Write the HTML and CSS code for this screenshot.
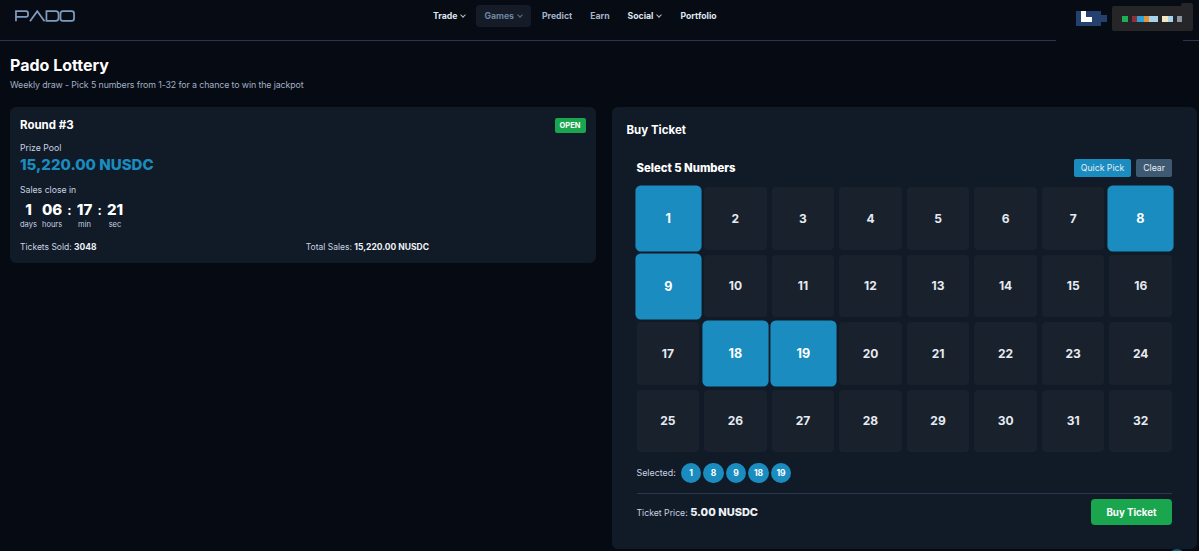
FILE: index.html
```html
<!DOCTYPE html>
<html lang="en">

<head>
    <meta charset="UTF-8">
    <meta name="viewport" content="width=device-width, initial-scale=1.0">
    <title>Pado Lottery</title>
    <link rel="stylesheet" href="styles.css">
</head>

<body>
    <header class="topbar">
        <svg class="logo" width="60" height="12" viewBox="0 0 62 12" fill="none" stroke="#7f9cc0" stroke-width="1.8" role="img" aria-label="PADO">
            <path d="M1 11.5V1H11.5Q13.5 1 13.5 3.5V4.5Q13.5 7 11.5 7H1"/>
            <path d="M15.5 11.5L23 1L30.5 11.5"/>
            <path d="M32.5 1H42Q45 1 45 4V8Q45 11 42 11H32.5Z"/>
            <path d="M49.5 1H58.5Q61 1 61 3.5V8.5Q61 11 58.5 11H49.5Q47 11 47 8.5V3.5Q47 1 49.5 1Z"/>
        </svg>
        <nav class="nav">
            <a class="nav-link">Trade <span class="chev"></span></a>
            <a class="nav-link active">Games <span class="chev"></span></a>
            <a class="nav-link muted">Predict</a>
            <a class="nav-link muted">Earn</a>
            <a class="nav-link">Social <span class="chev"></span></a>
            <a class="nav-link">Portfolio</a>
        </nav>
        <div class="wallet">
            <div class="wallet-icon">
                <span class="wallet-square"><span class="wallet-mark"></span></span>
                <span class="wallet-tab"></span>
            </div>
            <div class="wallet-box">
                <span class="px green"></span>
                <span class="px red"></span>
                <span class="px blue"></span>
                <span class="px orange"></span>
                <span class="px sky"></span>
                <span class="px cream gap"></span>
                <span class="px sky short"></span>
                <span class="px grey gap"></span>
            </div>
        </div>
    </header>

    <main class="page">
        <h1>Pado Lottery</h1>
        <p class="subtitle">Weekly draw - Pick 5 numbers from 1-32 for a chance to win the jackpot</p>

        <div class="columns">
            <section class="card round-card">
                <div class="round-head">
                    <h2>Round #3</h2>
                    <span class="badge">OPEN</span>
                </div>
                <div class="label">Prize Pool</div>
                <div class="prize">15,220.00 NUSDC</div>
                <div class="label close-label">Sales close in</div>
                <div class="countdown">
                    <div class="unit"><b>1</b><span>days</span></div>
                    <div class="unit"><b>06</b><span>hours</span></div>
                    <i>:</i>
                    <div class="unit"><b>17</b><span>min</span></div>
                    <i>:</i>
                    <div class="unit"><b>21</b><span>sec</span></div>
                </div>
                <div class="stats">
                    <div>Tickets Sold: <b>3048</b></div>
                    <div>Total Sales: <b>15,220.00 NUSDC</b></div>
                </div>
            </section>

            <section class="card buy-card">
                <h2 class="buy-title">Buy Ticket</h2>
                <div class="picker">
                    <div class="picker-head">
                        <h3>Select 5 Numbers</h3>
                        <div class="picker-actions">
                            <button class="small-btn quick">Quick Pick</button>
                            <button class="small-btn clear">Clear</button>
                        </div>
                    </div>
                    <div class="numbers">
                        <button class="num selected">1</button>
                        <button class="num">2</button>
                        <button class="num">3</button>
                        <button class="num">4</button>
                        <button class="num">5</button>
                        <button class="num">6</button>
                        <button class="num">7</button>
                        <button class="num selected">8</button>
                        <button class="num selected">9</button>
                        <button class="num">10</button>
                        <button class="num">11</button>
                        <button class="num">12</button>
                        <button class="num">13</button>
                        <button class="num">14</button>
                        <button class="num">15</button>
                        <button class="num">16</button>
                        <button class="num">17</button>
                        <button class="num selected">18</button>
                        <button class="num selected">19</button>
                        <button class="num">20</button>
                        <button class="num">21</button>
                        <button class="num">22</button>
                        <button class="num">23</button>
                        <button class="num">24</button>
                        <button class="num">25</button>
                        <button class="num">26</button>
                        <button class="num">27</button>
                        <button class="num">28</button>
                        <button class="num">29</button>
                        <button class="num">30</button>
                        <button class="num">31</button>
                        <button class="num">32</button>
                    </div>
                    <div class="selected-row">
                        <span>Selected:</span>
                        <span class="ball">1</span>
                        <span class="ball">8</span>
                        <span class="ball">9</span>
                        <span class="ball">18</span>
                        <span class="ball">19</span>
                    </div>
                    <div class="price-row">
                        <div class="price">Ticket Price: <b>5.00 NUSDC</b></div>
                        <button class="buy-btn">Buy Ticket</button>
                    </div>
                </div>
            </section>
        </div>
    </main>

    <div class="float-btn"></div>
</body>

</html>
```

FILE: styles.css
```css
* {
    box-sizing: border-box;
}

body {
    font-family: Inter, "Noto Sans", sans-serif;
    margin: 0;
    height: 551px;
    overflow: hidden;
    position: relative;
    background-color: #050a13;
    color: white;
}

h1,
h2,
h3,
p {
    margin: 0;
}

button {
    font-family: inherit;
    border: none;
    color: white;
}

.topbar {
    position: relative;
    height: 41px;
    border-bottom: 1px solid #2a3650;
    background-color: #070b14;
    display: flex;
    align-items: center;
    padding-left: 15px;
}

.logo {
    margin-top: -9px;
}

.nav {
    position: absolute;
    left: 425px;
    top: 5px;
    display: flex;
    align-items: center;
    gap: 2px;
}

.nav-link {
    display: flex;
    align-items: center;
    gap: 3px;
    height: 22px;
    padding: 0 8px;
    font-size: 8.7px;
    font-weight: 700;
    color: #dfe6ee;
    border-radius: 4px;
}

.nav-link.active {
    background-color: #151c28;
    color: #6f84a0;
    margin-right: 1px;
}

.nav-link.muted {
    color: #a5b3c6;
}

.chev {
    width: 4px;
    height: 4px;
    margin: -2px 1px 0 1px;
    border-right: 1px solid currentColor;
    border-bottom: 1px solid currentColor;
    transform: rotate(45deg);
    opacity: 0.8;
}

.wallet {
    position: absolute;
    left: 1056px;
    top: 0;
    width: 127px;
    height: 41px;
    background-color: #070b14;
}

.wallet-icon {
    position: absolute;
    left: 20px;
    top: 11px;
    display: flex;
    align-items: center;
}

.wallet-square {
    position: relative;
    width: 25px;
    height: 15px;
    background-color: #23406e;
}

.wallet-mark {
    position: absolute;
    left: 5px;
    top: 0;
    width: 11px;
    height: 11px;
    background: linear-gradient(#fff, #fff) left top / 5px 100% no-repeat, linear-gradient(#fff, #fff) left bottom / 100% 5px no-repeat;
}

.wallet-tab {
    width: 6px;
    height: 7px;
    background-color: #23406e;
}

.wallet-box {
    position: absolute;
    left: 56px;
    top: 6px;
    width: 81px;
    height: 25px;
    padding-left: 10px;
    display: flex;
    align-items: center;
    background-color: #262628;
    border-radius: 2px;
}

.wallet-box::after {
    content: "";
    position: absolute;
    right: 0;
    top: -3px;
    width: 12px;
    height: 4px;
    background-color: #262628;
    border-radius: 2px 2px 0 0;
}

.px {
    height: 6px;
}

.px.green {
    width: 6px;
    margin-right: 4px;
    background-color: #1fae54;
}

.px.red {
    width: 5px;
    background-color: #8e2f3a;
}

.px.blue {
    width: 7px;
    background-color: #2ba3d8;
}

.px.orange {
    width: 5px;
    background-color: #e59338;
}

.px.sky {
    width: 9px;
    background-color: #a9d3ec;
}

.px.cream {
    width: 6px;
    background-color: #f2e6c4;
}

.px.gap {
    margin-left: 4px;
}

.px.short {
    width: 5px;
}

.px.grey {
    width: 5px;
    background-color: #8d97a3;
}

.page {
    padding: 14px 2px 0 10px;
}

h1 {
    font-size: 16px;
    font-weight: 700;
    line-height: 20px;
}

.subtitle {
    margin-top: 4px;
    font-size: 8.8px;
    letter-spacing: -0.1px;
    line-height: 12px;
    color: #a3b0c4;
}

.columns {
    margin-top: 16px;
    display: grid;
    grid-template-columns: 1fr 1fr;
    gap: 16px;
    align-items: start;
}

.card {
    background-color: #111a27;
    border-radius: 6px;
}

.round-card {
    height: 156px;
    padding: 10px;
}

.round-head {
    display: flex;
    justify-content: space-between;
    align-items: flex-start;
}

h2 {
    font-size: 11.5px;
    font-weight: 700;
    line-height: 17px;
}

.badge {
    margin-top: 1px;
    background-color: #1aa64e;
    border-radius: 2px;
    font-size: 7.5px;
    font-weight: 700;
    line-height: 15px;
    padding: 0 5px;
}

.label {
    margin-top: 8px;
    font-size: 8.7px;
    line-height: 12px;
    color: #c9d3e0;
}

.prize {
    font-size: 15px;
    font-weight: 800;
    line-height: 20px;
    margin-top: 1px;
    color: #1a8cbf;
}

.close-label {
    margin-top: 9px;
}

.countdown {
    display: flex;
    margin-top: 4px;
    align-items: flex-start;
    gap: 5px;
}

.unit {
    display: flex;
    flex-direction: column;
    align-items: center;
}

.unit b {
    font-size: 15px;
    font-weight: 800;
    line-height: 20px;
}

.unit span {
    font-size: 7.5px;
    line-height: 10px;
    color: #c9d3e0;
}

.unit:nth-child(4),
.unit:nth-child(6) {
    min-width: 16px;
}

.countdown i {
    font-style: normal;
    font-weight: 700;
    font-size: 13px;
    line-height: 21px;
}

.stats {
    margin-top: 11px;
    display: grid;
    grid-template-columns: 1fr 1fr;
    gap: 6px;
    font-size: 8.5px;
    line-height: 12px;
    color: #c9d3e0;
}

.stats b {
    color: #eef2f6;
}

.buy-card {
    height: 442px;
    padding: 15px;
}

.buy-title {
    line-height: 17px;
}

.picker {
    padding: 0 10px;
    margin-top: 19px;
}

.picker-head {
    display: flex;
    justify-content: space-between;
    align-items: center;
    height: 19px;
}

h3 {
    font-size: 11.3px;
    font-weight: 800;
}

.picker-actions {
    display: flex;
    gap: 5px;
}

.small-btn {
    height: 18px;
    padding: 0 7px;
    border-radius: 2px;
    font-size: 8.7px;
    color: #e6edf3;
}

.quick {
    background-color: #1a8cbf;
}

.clear {
    background-color: #3e5a72;
}

.numbers {
    margin-top: 10px;
    display: grid;
    grid-template-columns: repeat(8, 1fr);
    gap: 5px;
}

.num {
    aspect-ratio: 1;
    background-color: #19212d;
    border-radius: 4px;
    font-size: 12px;
    font-weight: 700;
    color: #e6ebf1;
    padding: 0;
}

.num.selected {
    background-color: #1a8cbf;
    color: white;
    transform: scale(1.05);
    border-radius: 5px;
}

.selected-row {
    margin-top: 10px;
    height: 21px;
    display: flex;
    align-items: center;
    gap: 2px;
    font-size: 8.9px;
    color: #c9d3e0;
}

.selected-row > span:first-child {
    margin-right: 3px;
}

.ball {
    width: 20.5px;
    height: 20.5px;
    border-radius: 50%;
    background-color: #1a8cbf;
    color: white;
    font-size: 8.5px;
    font-weight: 700;
    display: flex;
    align-items: center;
    justify-content: center;
}

.price-row {
    margin-top: 10px;
    border-top: 1px solid #2a3650;
    padding-top: 5px;
    display: flex;
    justify-content: space-between;
    align-items: center;
}

.price {
    font-size: 8.7px;
    color: #c9d3e0;
}

.price b {
    font-size: 11px;
    font-weight: 800;
    color: #eef2f6;
}

.buy-btn {
    width: 81px;
    height: 26px;
    border-radius: 4px;
    background-color: #1aa64e;
    font-size: 9.7px;
    font-weight: 700;
}

.float-btn {
    position: absolute;
    left: 1168px;
    top: 549px;
    width: 18px;
    height: 18px;
    border-radius: 50%;
    background-color: #15597a;
}
```
